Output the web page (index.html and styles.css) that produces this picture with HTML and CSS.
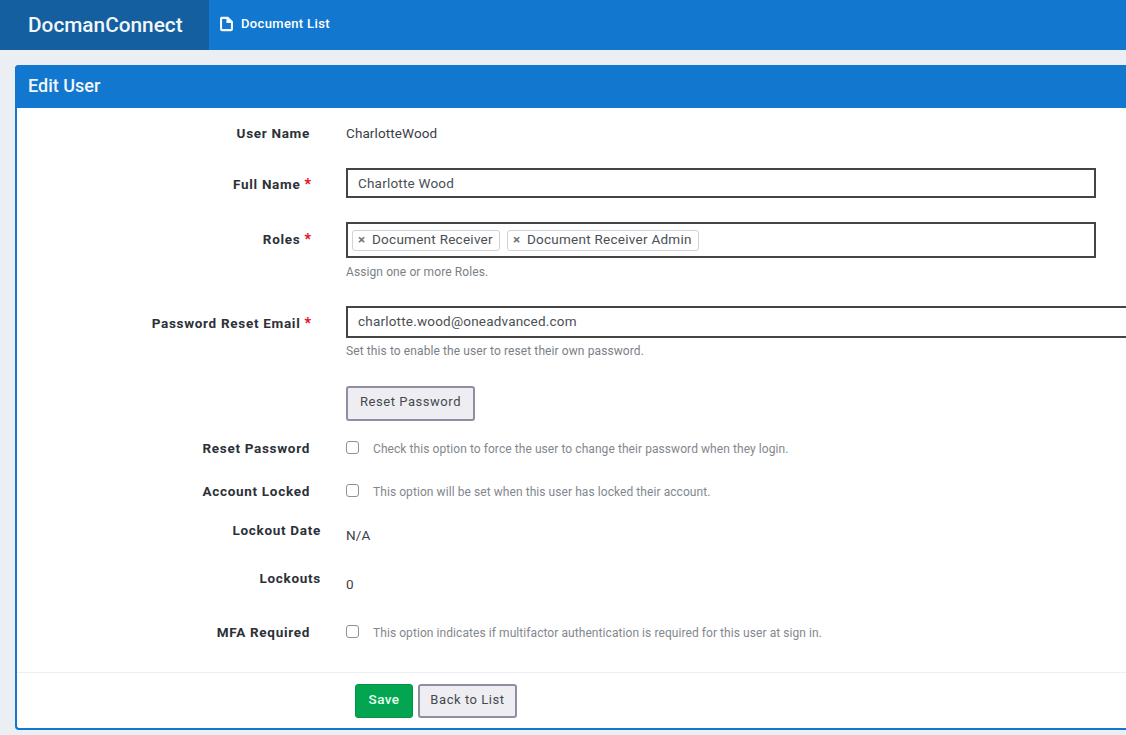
FILE: index.html
```html
<!DOCTYPE html>
<html lang="en">
<head>
<meta charset="utf-8">
<title>Edit User</title>
<link rel="stylesheet" href="styles.css">
</head>
<body>
<nav class="navbar">
  <a class="brand">DocmanConnect</a>
  <a class="nav-link">
    <svg class="nav-icon" viewBox="0 0 15 16" width="15" height="16" aria-hidden="true"><path fill-rule="evenodd" d="M2.5 .8h6.7L14 5.6V13a2.2 2.2 0 0 1-2.2 2.2H3.2A2.2 2.2 0 0 1 1 13V2.3A1.5 1.5 0 0 1 2.5 .8zm.6 2.1v10.2h8.8V7H7.4V2.9z" fill="#f4f8fc"/></svg>
    Document List
  </a>
</nav>
<main class="card">
  <h1 class="card-title">Edit User</h1>
  <form class="card-body">
    <div class="row row-user">
      <span class="label">User Name</span>
      <span class="value">CharlotteWood</span>
    </div>
    <div class="row row-full">
      <span class="label">Full Name <b class="req">*</b></span>
      <div class="input">Charlotte Wood</div>
    </div>
    <div class="row row-roles">
      <span class="label">Roles <b class="req">*</b></span>
      <div>
        <div class="input tags">
          <span class="tag"><i class="x">×</i>Document Receiver</span>
          <span class="tag"><i class="x">×</i>Document Receiver Admin</span>
        </div>
        <p class="help">Assign one or more Roles.</p>
      </div>
    </div>
    <div class="row row-email">
      <span class="label">Password Reset Email <b class="req">*</b></span>
      <div>
        <div class="input input-wide">charlotte.wood@oneadvanced.com</div>
        <p class="help help-email">Set this to enable the user to reset their own password.</p>
      </div>
    </div>
    <div class="row row-reset">
      <span></span>
      <div><button type="button" class="btn btn-reset">Reset Password</button></div>
    </div>
    <div class="row row-check row-c1">
      <span class="label">Reset Password</span>
      <div class="check"><span class="box"></span><span class="hint">Check this option to force the user to change their password when they login.</span></div>
    </div>
    <div class="row row-check row-c2">
      <span class="label">Account Locked</span>
      <div class="check"><span class="box"></span><span class="hint">This option will be set when this user has locked their account.</span></div>
    </div>
    <div class="row row-date">
      <span class="label label-shift">Lockout Date</span>
      <span class="value">N/A</span>
    </div>
    <div class="row row-locks">
      <span class="label label-shift">Lockouts</span>
      <span class="value">0</span>
    </div>
    <div class="row row-check row-c3">
      <span class="label">MFA Required</span>
      <div class="check"><span class="box"></span><span class="hint">This option indicates if multifactor authentication is required for this user at sign in.</span></div>
    </div>
    <div class="actions">
      <button type="button" class="btn btn-save">Save</button>
      <button type="button" class="btn btn-back">Back to List</button>
    </div>
  </form>
</main>
</body>
</html>
```

FILE: styles.css
```css
* { box-sizing: border-box; }
html, body { margin: 0; height: 735px; overflow: hidden; }
body {
  background: #ebeef2;
  font-family: Roboto, "Liberation Sans", sans-serif;
  font-size: 13px;
  color: #3a4048;
}
.navbar {
  display: flex;
  height: 50px;
  background: #1277cf;
  color: #fff;
}
.brand {
  width: 209px;
  padding-left: 28px;
  background: #135f9f;
  font-size: 20.8px;
  font-weight: 500;
  line-height: 50px;
  color: #f2f6fa;
}
.nav-link {
  display: flex;
  align-items: center;
  gap: 7px;
  height: 47px;
  padding-left: 10px;
  font-size: 13px;
  font-weight: 500;
  letter-spacing: .35px;
}
.card {
  width: 1111px;
  height: 665px;
  margin: 15px 0 0 15px;
  background: #fff;
  border: 2px solid #1277cf;
  border-top: 0;
  border-right: 0;
  border-radius: 4px 0 0 4px;
}
.card-title {
  margin: 0 0 0 -2px;
  height: 43px;
  padding-left: 13px;
  background: #1277cf;
  border-radius: 4px 0 0 0;
  color: #f2f6fa;
  font-size: 18px;
  font-weight: 500;
  line-height: 41px;
}
.row {
  display: grid;
  grid-template-columns: 293px 750px;
  column-gap: 36px;
  align-items: start;
}
.label {
  text-align: right;
  font-size: 13.5px;
  font-weight: 700;
  color: #2c3138;
  letter-spacing: .7px;
  line-height: 20px;
}
.req { color: #e8102a; font-size: 14px; letter-spacing: 0; }
.row-full .label, .row-roles .label, .row-email .label { margin-right: -1px; }
.label-shift { margin-right: -11px; }
.value { font-size: 13.5px; letter-spacing: .1px; line-height: 20px; color: #3a4048; }
.row-user { padding-top: 15px; }
.row-full { margin-top: 25px; }
.row-full .label { margin-top: 6px; }
.row-roles { margin-top: 24px; }
.row-roles .label { margin-top: 7px; }
.row-email { margin-top: 27px; }
.row-email .label { margin-top: 7px; }
.input {
  height: 30px;
  padding: 0 10px;
  border: 2px solid #444;
  background: #fff;
  line-height: 26px;
  font-size: 13.5px;
  letter-spacing: .2px;
  color: #4a4f55;
}
.input-wide { width: 780px; height: 32px; line-height: 26px; border-right: 0; }
.tags {
  display: flex;
  align-items: center;
  gap: 7px;
  height: 36px;
  padding: 0 4px;
}
.tag {
  display: flex;
  align-items: center;
  height: 21px;
  padding: 0 6px 1px 4px;
  border: 1px solid #cfd3d8;
  border-radius: 3px;
  letter-spacing: .26px;
  line-height: 19px;
  white-space: nowrap;
}
.x {
  width: 15px;
  padding-left: 1px;
  font-style: normal;
  font-weight: 700;
  color: #6f757c;
}
.help {
  margin: 7px 0 0;
  font-size: 12px;
  letter-spacing: .1px;
  line-height: 14px;
  color: #7b8087;
}
.help-email { margin-top: 6px; }
.row-reset { margin-top: 28px; }
.btn {
  font: inherit;
  border-radius: 3px;
  cursor: pointer;
}
.btn-reset, .btn-back {
  background: #eeeef2;
  border: 2px solid #8f8fa3;
  color: #45494f;
  letter-spacing: .55px;
}
.btn-reset { width: 129px; height: 35px; padding: 0 0 4px; }
.row-check .label { margin-top: 0; }
.check { display: flex; align-items: center; height: 20px; }
.box {
  width: 13px;
  height: 13px;
  margin-right: 14px;
  margin-top: -2px;
  border: 1px solid #8d9096;
  border-radius: 3px;
  background: #fff;
}
.hint { font-size: 12px; letter-spacing: .07px; color: #83878e; padding-top: 2px; }
.row-c1 { margin-top: 17px; }
.row-c2 { margin-top: 23px; }
.row-date { margin-top: 19px; }
.row-date .value { margin-top: 5px; }
.row-locks { margin-top: 3px; padding-top: 20px; }
.row-locks .value { margin-top: 6px; }
.row-c3 { margin-top: 28px; }
.actions {
  display: flex;
  gap: 5px;
  margin-top: 30px;
  padding: 11px 0 0 338px;
  border-top: 1px solid #eceef1;
}
.btn-save {
  width: 58px;
  height: 34px;
  background: #03a550;
  border: 1px solid #039348;
  color: #eafff2;
  font-size: 13.5px;
  font-weight: 500;
  letter-spacing: .4px;
  padding-bottom: 5px;
}
.btn-back { width: 99px; height: 34px; padding: 0 0 4px; }
```
